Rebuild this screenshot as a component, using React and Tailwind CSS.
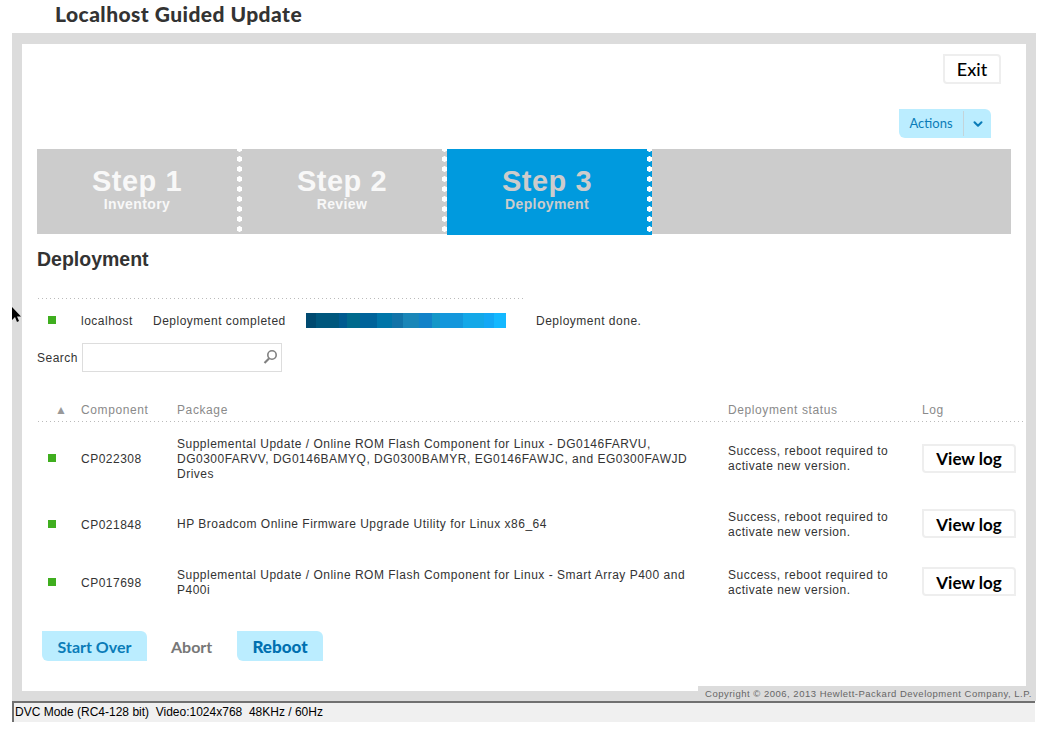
import { ChevronDown } from "lucide-react";

// Guided update, step 3 of the wizard
const BODY = "font-['Liberation_Sans',Arial,sans-serif]";
const HP = "font-['Lato',sans-serif]";
const DOTTED = "h-px bg-[linear-gradient(to_right,#bbbbbb_1px,transparent_1px)] bg-[length:4px_1px]";

const STEPS = [
  ["Step 1", "Inventory", false],
  ["Step 2", "Review", false],
  ["Step 3", "Deployment", true],
];

const BAR = [
  "w-[10px] bg-[#004a70]",
  "w-[23px] bg-[#00577d]",
  "w-[8px] bg-[#005a8f]",
  "w-[13px] bg-[#006a8c]",
  "w-[17px] bg-[#00639a]",
  "w-[15px] bg-[#0075a8]",
  "w-[11px] bg-[#1273a8]",
  "w-[16px] bg-[#1a86b8]",
  "w-[13px] bg-[#1282c8]",
  "w-[8px] bg-[#1497c8]",
  "w-[23px] bg-[#1497dc]",
  "w-[21px] bg-[#14a8e8]",
  "w-[10px] bg-[#14a8f5]",
  "w-[12px] bg-[#14b8ff]",
];

const ROWS = [
  ["CP022308", "Supplemental Update / Online ROM Flash Component for Linux - DG0146FARVU, DG0300FARVV, DG0146BAMYQ, DG0300BAMYR, EG0146FAWJC, and EG0300FAWJD Drives", "h-[74px]"],
  ["CP021848", "HP Broadcom Online Firmware Upgrade Utility for Linux x86_64", "h-[57px]"],
  ["CP017698", "Supplemental Update / Online ROM Flash Component for Linux - Smart Array P400 and P400i", "h-[59px]"],
];

const GRID = "grid grid-cols-[44px_96px_551px_194px_1fr] items-center";

const Dot = () => <span className="block w-2 h-2 bg-[#3fae1f] ml-[11px] mb-[2px]" />;

const Step = ([title, sub, active]) => (
  <div key={title} className={`relative w-[205px] flex flex-col items-center pt-[15px] pr-[5px] ${BODY} ${active ? "bg-[#009ade] text-[#cccccc] h-[86px]" : "h-[85px] text-[#f8f8f8]"}`}>
    <span className="text-[29px] font-bold leading-[36px] -mt-[1px]">{title}</span>
    <span className="text-[14px] font-bold leading-[14px] -mt-[2px] tracking-[0.4px]">{sub}</span>
    <span className="absolute right-0 top-0 bottom-0 w-[5px] bg-[radial-gradient(circle,#ffffff_2.5px,transparent_2.9px)] bg-[length:5px_10px] bg-[position:0_-5px]" />
  </div>
);

const ViewLog = () => (
  <button className={`w-[94px] h-[29px] pt-[1px] bg-white border-2 border-[#eeeeee] rounded-tr-[4px] rounded-bl-[4px] text-black text-[17px] font-bold leading-none tracking-normal mb-[2px] ${HP}`}>View log</button>
);

const Cursor = () => (
  <svg className="absolute left-[12px] top-[307px]" width="10" height="16" viewBox="0 0 10 16">
    <path d="M0 0 L0 13 L3 10 L5 15 L7 14 L5 9.5 L9 9.5 Z" fill="#000" />
  </svg>
);

export default function App() {
  return (
    <div className={`relative w-[1041px] h-[729px] bg-white overflow-hidden ${BODY}`}>
      <div className={`h-[33px] pl-[55px] text-[#333] text-[21px] font-black leading-[27px] tracking-[0.45px] ${HP}`}>Localhost Guided Update</div>

      <div className="relative ml-[12px] w-[1024px] h-[668px] bg-[#dcdcdc] pt-[11px] pl-[10px] pr-[10px] pb-[10px]">
        <div className="h-[647px] bg-white pl-[15px] pt-[10px] text-[#333] text-[12px] tracking-[0.5px]">
          <div className="flex justify-end pr-[25px] h-[30px]">
            <button className={`w-[58px] h-[30px] border-2 border-[#eeeeee] rounded-tr-[4px] rounded-bl-[4px] text-black text-[18px] font-medium leading-none tracking-normal ${HP}`}>Exit</button>
          </div>

          <div className="flex justify-end pr-[35px] mt-[25px] h-[29px]">
            <div className={`w-[92px] h-[29px] flex items-center bg-[#bbedff] rounded-tr-[6px] rounded-bl-[6px] text-[#0a7cb8] text-[13px] tracking-normal ${HP}`}>
              <span className="w-[64px] text-center">Actions</span>
              <span className="flex-1 h-[25px] border-l border-[#c4d4da] flex items-center justify-center">
                <ChevronDown size={14} strokeWidth={3.5} className="text-[#0a7cb8]" />
              </span>
            </div>
          </div>

          <div className="mt-[11px] w-[974px] h-[85px] bg-[#cccccc] flex">
            {STEPS.map(Step)}
          </div>

          <h1 className="mt-[13px] text-[19.5px] leading-[24px] font-bold tracking-normal text-[#333]">Deployment</h1>

          <div className={`mt-[27px] ml-[1px] w-[488px] ${DOTTED}`} />

          <div className="mt-[14px] h-[15px] flex items-center">
            <span className="w-[44px]"><Dot /></span>
            <span className="w-[72px]">localhost</span>
            <span className="w-[153px]">Deployment completed</span>
            <div className="flex h-[15px] w-[200px]">
              {BAR.map((c, i) => <span key={i} className={c} />)}
            </div>
            <span className="ml-[30px]">Deployment done.</span>
          </div>

          <div className="mt-[15px] flex items-center">
            <label className="w-[45px]">Search</label>
            <div className="relative w-[200px] h-[29px] border border-[#dddddd] bg-white">
              <svg className="absolute right-[3px] top-[5px]" width="15" height="16" viewBox="0 0 15 16" fill="none" stroke="#808080">
                <circle cx="9" cy="6" r="4.2" strokeWidth="1.6" />
                <path d="M6 9.5 L1.5 14" strokeWidth="2.2" />
              </svg>
            </div>
          </div>

          <div className={`${GRID} mt-[29px] h-[20px] pb-[2px] text-[#8a8a8a] tracking-[0.6px]`}>
            <span className="ml-[18px] text-[12px] text-[#999]">▲</span>
            <span>Component</span>
            <span>Package</span>
            <span>Deployment status</span>
            <span>Log</span>
          </div>
          <div className={`ml-[1px] ${DOTTED}`} />

          {ROWS.map(([id, pkg, h]) => (
            <div key={id} className={`${GRID} ${h}`}>
              <Dot />
              <span>{id}</span>
              <span className="pr-[28px] leading-[15px]">{pkg}</span>
              <span className="leading-[15px] pr-[24px]">Success, reboot required to activate new version.</span>
              <ViewLog />
            </div>
          ))}

          <div className={`mt-[19px] ml-[5px] flex items-center text-[16px] font-bold tracking-normal ${HP}`}>
            <button className="w-[105px] h-[30px] pt-[1px] bg-[#bbedff] rounded-tr-[6px] rounded-bl-[6px] text-[#0a7cb8]">Start Over</button>
            <span className="ml-[24px] w-[41px] pt-[1px] text-[#777777]">Abort</span>
            <button className="ml-[25px] w-[86px] h-[30px] pt-[1px] bg-[#bbedff] rounded-tr-[6px] rounded-bl-[6px] text-[#0070b0] text-[17px] font-black">Reboot</button>
          </div>
        </div>

        <div className="absolute right-0 bottom-0 w-[338px] h-[15px] bg-[#dcdcdc] text-[#666] text-[9.5px] leading-[16px] tracking-[0.5px] text-right pr-[4px]">Copyright © 2006, 2013 Hewlett-Packard Development Company, L.P.</div>
      </div>

      <div className="ml-[12px] w-[1023px] h-[21px] bg-[#f0f0f0] border-t-2 border-l-2 border-[#707070] text-black text-[12px] leading-[19px] whitespace-pre pl-[1px]">DVC Mode (RC4-128 bit)  Video:1024x768  48KHz / 60Hz</div>

      <Cursor />
    </div>
  );
}
